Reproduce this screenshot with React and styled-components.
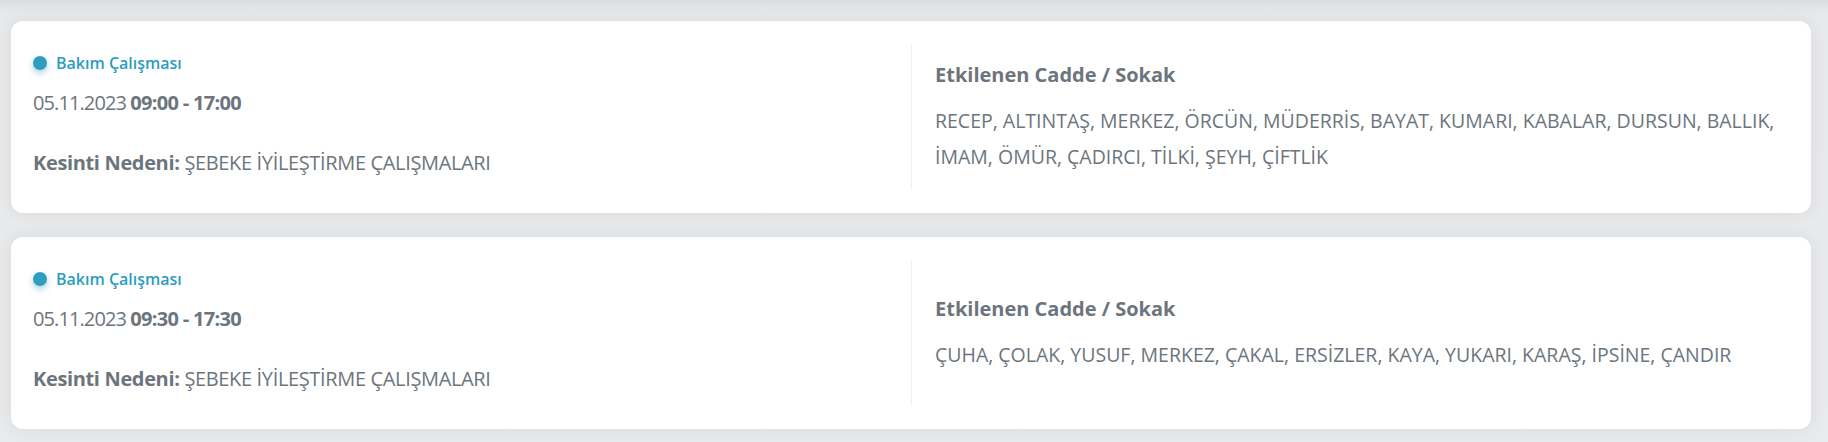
import React from "react";
import styled, { createGlobalStyle } from "styled-components";

const Global = createGlobalStyle`
  html, body { margin: 0; padding: 0; }
  body {
    background: linear-gradient(to bottom, #dcdde0 0px, #e8e9eb 14px, #e9eaec 100%);
    font-family: "Open Sans", "Noto Sans", sans-serif;
    color: #6c757d;
  }
`;

const Page = styled.div`
  display: flex;
  flex-direction: column;
  gap: 24px;
  padding: 21px 17px 13px 11px;
`;

const Card = styled.div`
  background: #fff;
  border-radius: 12px;
  box-shadow: 0 0 18px rgba(0, 0, 0, 0.07);
  padding: 23px 22px;
  height: 192px;
  box-sizing: border-box;
  display: grid;
  grid-template-columns: 1fr 1fr;
`;

const Left = styled.div`
  display: flex;
  flex-direction: column;
`;

const Status = styled.div`
  display: flex;
  align-items: center;
  gap: 9px;
  margin-top: 10px;
  height: 18px;
  font-size: 16px;
  font-weight: 600;
  color: #2b9cbf;
`;

const Dot = styled.span`
  width: 14px;
  height: 14px;
  border-radius: 50%;
  background: #2e9dbf;
  box-shadow: 0 3px 6px rgba(46, 157, 191, 0.45);
  flex: none;
`;

const DateLine = styled.div`
  margin-top: 18px;
  font-size: 20px;
  line-height: 26px;
  letter-spacing: -0.9px;
  b { font-weight: 700; letter-spacing: -0.7px; }
`;

const Reason = styled.div`
  margin-top: 34px;
  font-size: 20px;
  line-height: 26px;
  letter-spacing: -0.35px;
  b { font-weight: 700; }
`;

const Right = styled.div`
  border-left: 1px solid #eef0f1;
  padding-left: 23px;
  padding-top: 3px;
  display: flex;
  flex-direction: column;
  justify-content: center;
`;

const Heading = styled.div`
  font-size: 20px;
  font-weight: 700;
  line-height: 26px;
  margin-bottom: 15px;
`;

const Streets = styled.div`
  font-size: 19.5px;
  line-height: 36px;
`;

const items = [
  {
    time: "09:00 - 17:00",
    streets:
      "RECEP, ALTINTAŞ, MERKEZ, ÖRCÜN, MÜDERRİS, BAYAT, KUMARI, KABALAR, DURSUN, BALLIK, İMAM, ÖMÜR, ÇADIRCI, TİLKİ, ŞEYH, ÇİFTLİK",
  },
  {
    time: "09:30 - 17:30",
    streets:
      "ÇUHA, ÇOLAK, YUSUF, MERKEZ, ÇAKAL, ERSİZLER, KAYA, YUKARI, KARAŞ, İPSİNE, ÇANDIR",
  },
];

export default function App() {
  return (
    <>
      <Global />
      <Page>
        {items.map((it, i) => (
          <Card key={i}>
            <Left>
              <Status>
                <Dot />
                Bakım Çalışması
              </Status>
              <DateLine>
                05.11.2023 <b>{it.time}</b>
              </DateLine>
              <Reason>
                <b>Kesinti Nedeni:</b> ŞEBEKE İYİLEŞTİRME ÇALIŞMALARI
              </Reason>
            </Left>
            <Right>
              <Heading>Etkilenen Cadde / Sokak</Heading>
              <Streets>{it.streets}</Streets>
            </Right>
          </Card>
        ))}
      </Page>
    </>
  );
}
